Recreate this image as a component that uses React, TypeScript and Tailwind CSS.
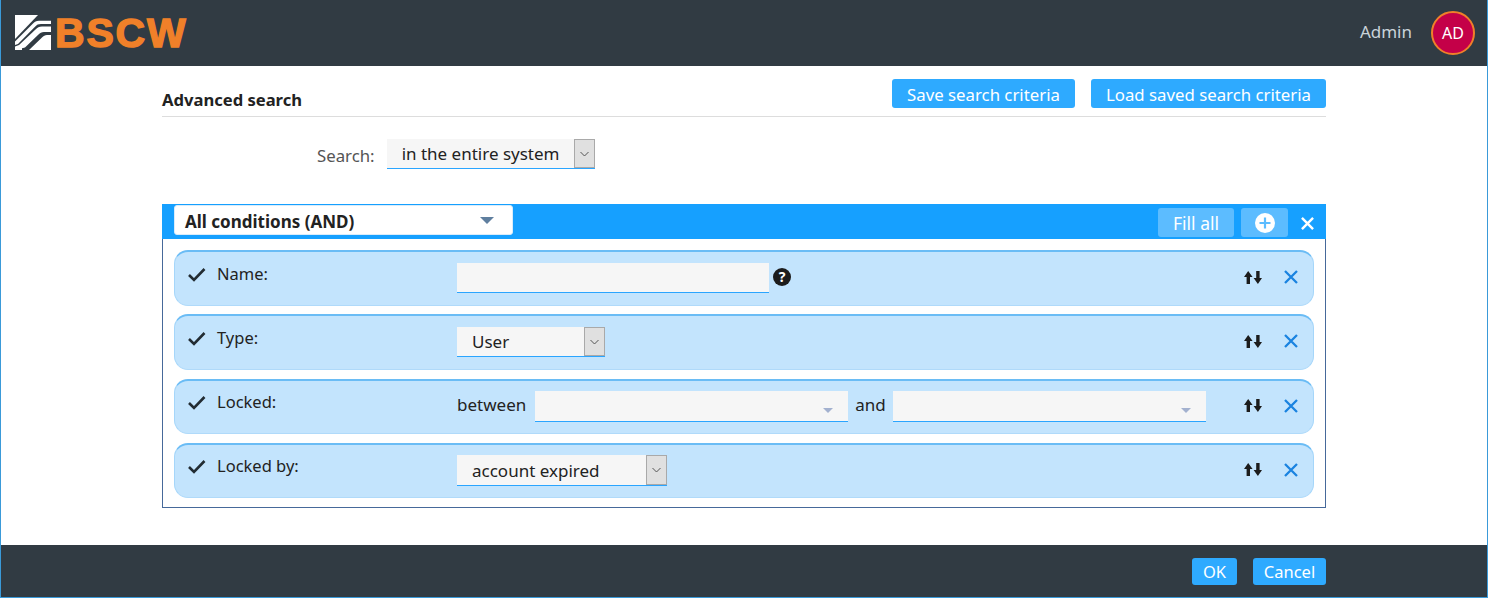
import React from "react";

const font = { fontFamily: '"Noto Sans", sans-serif' };

function Logo() {
  return (
    <div className="flex items-center gap-[3px]">
      <svg width="37" height="37" viewBox="0 0 37 37" className="block">
        <path d="M0 0H23L0 24Z" fill="#fff" />
        <path d="M0 26.5L18 8.5C20 6.5 21 5.7 24 5.7H36V9H26C23 9 22 9.7 20 11.7L3 29L0 30Z" fill="#fff" />
        <path d="M0 31.5L4 30L20.5 14.5C22.5 12.5 24 11.5 27 11.5H36V17H29C26.5 17 25 18 23.5 19.5L10 32.5L0 35Z" fill="#fff" />
        <path d="M14 35L27 22.5C28.5 21 30 20 32 20H36V35H14Z" fill="#fff" />
        <path d="M0 33.5L7 32V35H0Z" fill="#fff" />
      </svg>
      <span
        className="font-bold text-[41px] leading-none tracking-[1.8px] text-[#f08029] [-webkit-text-stroke:1.4px_#f08029]"
        style={{ fontFamily: '"Liberation Sans", sans-serif' }}
      >
        BSCW
      </span>
    </div>
  );
}

function Chevron() {
  return (
    <span className="w-[21px] self-stretch bg-[#e0e0e0] border border-[#a9a9a9] flex items-center justify-center">
      <svg width="9" height="6" viewBox="0 0 9 6" fill="none" stroke="#555" strokeWidth="1">
        <path d="M0.5 1L4.5 5L8.5 1" />
      </svg>
    </span>
  );
}

function Select({
  label,
  width,
  size = "h-[30px]",
  pad = "pt-0",
}: {
  label: string;
  width: string;
  size?: string;
  pad?: string;
}) {
  return (
    <div className={`${width} ${size} bg-[#f6f6f6] border-b border-[#2aa5ff] flex items-stretch`}>
      <span className={`flex-1 pl-[15px] ${pad} text-[17px] leading-[29px] text-[#222]`}>{label}</span>
      <Chevron />
    </div>
  );
}

function DateField() {
  return (
    <div className="w-[313px] h-[31px] bg-[#f6f6f6] border-b border-[#2aa5ff] flex items-end justify-end pr-[15px] pb-[8px]">
      <span className="w-0 h-0 border-x-[5px] border-x-transparent border-t-[5px] border-t-[#a3b1cf]" />
    </div>
  );
}

function SwapIcon() {
  return (
    <svg width="18" height="13" viewBox="0 0 18 13" fill="#1c1c1c">
      <path d="M4.2 0L8.6 6H6V13H2.6V6H0Z" />
      <path d="M12.2 0H15.6V7H18L13.9 13L9.6 7H12.2Z" />
    </svg>
  );
}

function XIcon({ size, color, sw }: { size: number; color: string; sw: number }) {
  return (
    <svg width={size} height={size} viewBox="0 0 14 14" fill="none" stroke={color} strokeWidth={sw}>
      <path d="M1 1L13 13M13 1L1 13" />
    </svg>
  );
}

function Row({
  label,
  h,
  pad = "pt-[11px]",
  children,
}: {
  label: string;
  h: string;
  pad?: string;
  children: React.ReactNode;
}) {
  return (
    <div className={`${h} relative flex bg-[#c3e4fd] rounded-[14px] border-t-2 border-t-[#6abcf5] border-x border-x-[#a5d6fa] border-b border-b-[#b0dafa]`}>
      <div className={`w-[282px] shrink-0 flex pl-[12px] ${pad} items-start`}>
        <svg width="20" height="15" viewBox="0 0 20 15" fill="none" stroke="#222c33" strokeWidth="2.6" className="mt-[4px]">
          <path d="M2 8L7 13L17.5 2" />
        </svg>
        <span className="ml-[10px] text-[16.5px] leading-[22px] text-[#222]">{label}</span>
      </div>
      <div className={`flex-1 flex items-start ${pad}`}>{children}</div>
      <div className="flex items-center pr-[15px] gap-[22px] pb-[3px]">
        <SwapIcon />
        <XIcon size={14} color="#1a83e0" sw={2.3} />
      </div>
    </div>
  );
}

export default function App() {
  return (
    <div className="w-[1488px] h-[598px] flex flex-col bg-white border-x border-b border-[#3a9ad9] overflow-hidden" style={font}>
      <header className="h-[66px] shrink-0 bg-[#313b43] flex items-center justify-between pl-[14px] pr-[12px]">
        <Logo />
        <div className="flex items-center gap-[19px]">
          <span className="text-[17px] text-[#c9d3da] mb-[3px]">Admin</span>
          <span className="w-[44px] h-[44px] rounded-full bg-[#c40048] border-2 border-[#f08029] flex items-center justify-center text-[16px] text-white">AD</span>
        </div>
      </header>

      <main className="flex-1 px-[161px]">
        <div className="h-[51px] border-b border-[#dddddd] flex justify-between pt-[13px]">
          <h1 className="pt-[10px] text-[16.6px] leading-[21px] font-bold text-[#222]">Advanced search</h1>
          <div className="flex gap-[16px]">
            <button className="h-[29px] w-[183px] rounded-[3px] bg-[#2eaaff] text-white text-[16.8px] leading-[31px]">Save search criteria</button>
            <button className="h-[29px] w-[235px] rounded-[3px] bg-[#2eaaff] text-white text-[16.8px] leading-[31px]">Load saved search criteria</button>
          </div>
        </div>

        <div className="flex items-start mt-[22px] ml-[155px]">
          <span className="text-[16.8px] leading-[24px] mt-[5px] text-[#555] mr-[12px]">Search:</span>
          <Select label="in the entire system" width="w-[208px]" />
        </div>

        <section className="mt-[35px] h-[304px] border border-[#46699a] border-t-0">
          <div className="-mx-px h-[35px] bg-[#16a0ff] flex items-start pl-[12px] pr-[12px] pt-[1px]">
            <div className="w-[339px] h-[30px] bg-white rounded-[3px] border border-[#d9ecfb] flex items-center justify-between pl-[10px] pr-[18px]">
              <span className="pt-[4px] text-[17px] leading-[24px] font-bold text-[#222]">All conditions (AND)</span>
              <span className="w-0 h-0 border-x-[7px] border-x-transparent border-t-[7px] border-t-[#5f7f9f]" />
            </div>
            <div className="ml-auto flex items-center pt-[3px]">
              <button className="h-[29px] w-[76px] rounded-[3px] bg-[#5cbcff] text-white text-[17.5px] leading-[31px]">Fill all</button>
              <button className="ml-[7px] h-[29px] w-[47px] rounded-[3px] bg-[#5cbcff] flex items-center justify-center">
                <svg width="20" height="20" viewBox="0 0 20 20">
                  <circle cx="10" cy="10" r="10" fill="#fff" />
                  <path d="M10 4.5V15.5M4.5 10H15.5" stroke="#5cbcff" strokeWidth="2.2" />
                </svg>
              </button>
              <span className="ml-[13px] mt-[2px]"><XIcon size={13} color="#fff" sw={2.6} /></span>
            </div>
          </div>

          <div className="px-[11px] pt-[11px] flex flex-col gap-[8px]">
            <Row label="Name:" h="h-[56px]">
              <div className="w-[312px] h-[30px] bg-[#f6f6f6] border-b border-[#2aa5ff]" />
              <span className="ml-[4px] mt-[5px] w-[18px] h-[18px] rounded-full bg-[#1c1c1c] text-white text-[14px] leading-[18px] font-bold text-center">?</span>
            </Row>
            <Row label="Type:" h="h-[56px]">
              <Select label="User" width="w-[148px]" />
            </Row>
            <Row label="Locked:" h="h-[55px] mt-[1px]" pad="pt-[10px]">
              <span className="text-[17px] leading-[28px] text-[#222] mr-[9px]">between</span>
              <DateField />
              <span className="text-[17px] leading-[28px] text-[#222] mx-[7px]">and</span>
              <DateField />
            </Row>
            <Row label="Locked by:" h="h-[55px] mt-[1px]" pad="pt-[10px]">
              <Select label="account expired" width="w-[210px]" size="h-[31px]" pad="pt-[1px]" />
            </Row>
          </div>
        </section>
      </main>

      <footer className="h-[52px] shrink-0 bg-[#313b43] flex items-start justify-end gap-[16px] pt-[13px] pr-[161px]">
        <button className="h-[27px] w-[45px] rounded-[3px] bg-[#2eaaff] text-white text-[16.5px] leading-[27px]">OK</button>
        <button className="h-[27px] w-[73px] rounded-[3px] bg-[#2eaaff] text-white text-[16.5px] leading-[27px]">Cancel</button>
      </footer>
    </div>
  );
}
